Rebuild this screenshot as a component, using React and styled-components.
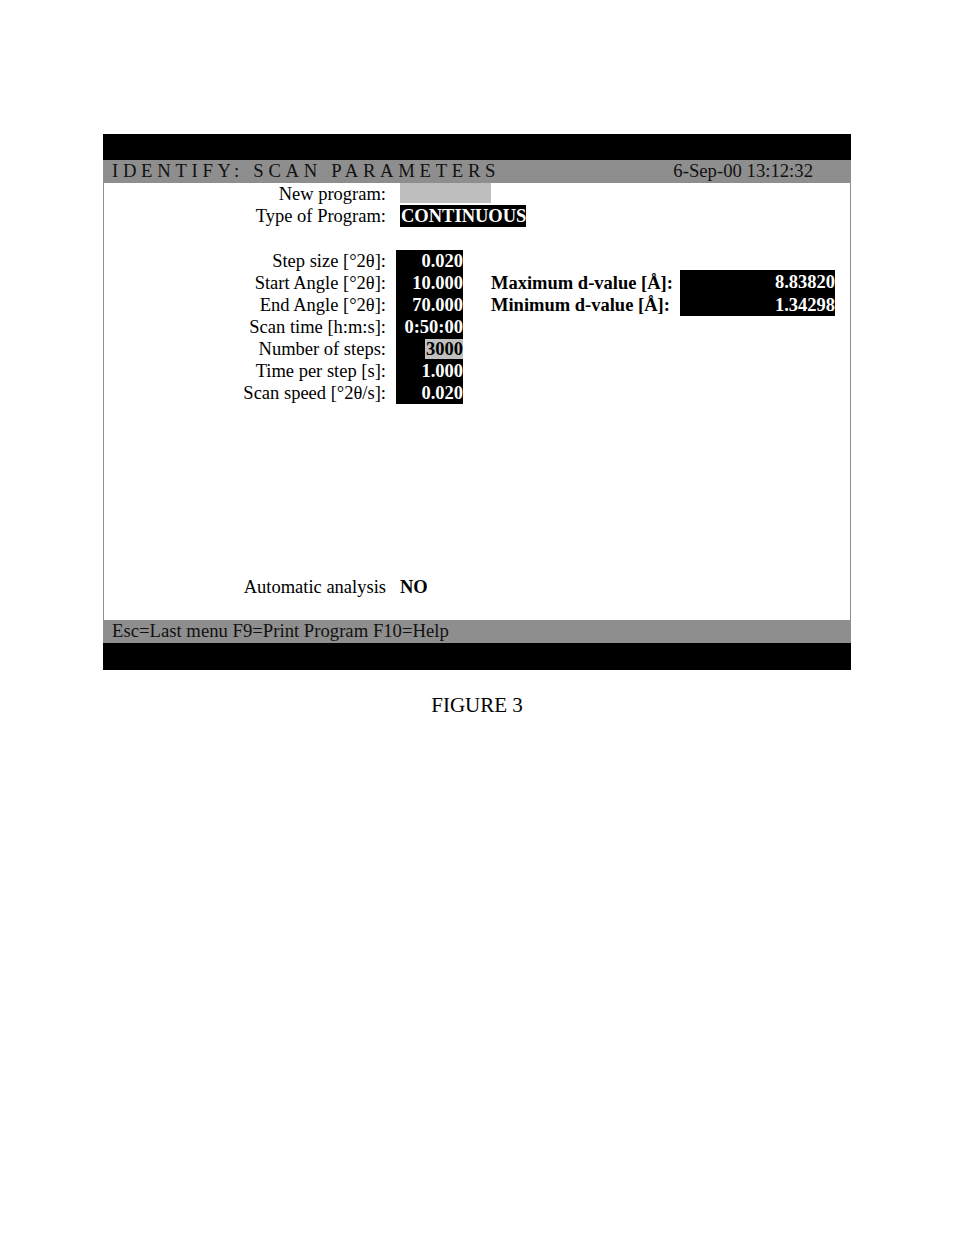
import React from "react";
import styled, { createGlobalStyle } from "styled-components";

const Global = createGlobalStyle`
  html, body { margin: 0; padding: 0; background: #fff; }
  body { font-family: "Liberation Serif", "Times New Roman", serif; color: #000; }
`;

const Page = styled.div`
  width: 954px;
  min-height: 1235px;
  padding-top: 134px;
  box-sizing: border-box;
  display: flex;
  flex-direction: column;
  align-items: flex-start;
`;

const Frame = styled.div`
  margin-left: 103px;
  width: 748px;
  display: flex;
  flex-direction: column;
`;

const BlackBar = styled.div`
  height: ${(p) => p.$h}px;
  background: #000;
`;

const GrayBar = styled.div`
  height: ${(p) => p.$h}px;
  background: #8e8e8e;
  display: flex;
  align-items: center;
  justify-content: space-between;
  padding: 0 38px 0 9px;
  font-size: 18.7px;
  color: #111;
  line-height: 1;
`;

const Title = styled.span`
  letter-spacing: 4.7px;
`;

const Body = styled.div`
  height: 437px;
  box-sizing: border-box;
  border-left: 1px solid #8e8e8e;
  border-right: 1px solid #8e8e8e;
  display: flex;
  flex-direction: column;
  font-size: 18.5px;
`;

const Row = styled.div`
  height: 22px;
  display: flex;
  align-items: center;
  line-height: 1;
`;

const Spacer = styled.div`
  height: ${(p) => p.$h}px;
`;

const Label = styled.div`
  width: 282px;
  text-align: right;
  white-space: nowrap;
`;

const EmptyField = styled.div`
  margin-left: 14px;
  width: 91px;
  height: 20px;
  align-self: flex-start;
  background: #bebebe;
`;

const InvField = styled.div`
  margin-left: 14px;
  background: #000;
  color: #fff;
  font-weight: bold;
  height: 22px;
  display: flex;
  align-items: center;
  padding: 0 0 0 1px;
  white-space: nowrap;
`;

const NumBox = styled.div`
  margin-left: 10px;
  width: 67px;
  height: 100%;
  background: #000;
  color: #fff;
  font-weight: bold;
  display: flex;
  align-items: center;
  justify-content: flex-end;
`;

const Highlight = styled.span`
  background: #c0c0c0;
  color: #000;
  height: 20px;
  display: flex;
  align-items: center;
  padding-left: 1px;
`;

const DLabel = styled.div`
  margin-left: 28px;
  width: 189px;
  font-weight: bold;
  white-space: nowrap;
`;

const DBox = styled.div`
  width: 155px;
  height: ${(p) => p.$h}px;
  align-self: ${(p) => (p.$top ? "flex-end" : "flex-start")};
  background: #000;
  color: #fff;
  font-weight: bold;
  display: flex;
  align-items: center;
  justify-content: flex-end;
`;

const BoldValue = styled.div`
  margin-left: 14px;
  font-weight: bold;
`;

const Caption = styled.div`
  width: 954px;
  text-align: center;
  font-size: 21px;
  margin-top: 23px;
`;

const params = [
  { label: "Step size [°2θ]:", value: "0.020" },
  { label: "Start Angle [°2θ]:", value: "10.000", d: { label: "Maximum d-value [Å]:", value: "8.83820", top: true } },
  { label: "End Angle [°2θ]:", value: "70.000", d: { label: "Minimum d-value [Å]:", value: "1.34298" } },
  { label: "Scan time [h:m:s]:", value: "0:50:00" },
  { label: "Number of steps:", value: "3000", hl: true },
  { label: "Time per step [s]:", value: "1.000" },
  { label: "Scan speed [°2θ/s]:", value: "0.020" },
];

export default function App() {
  return (
    <>
      <Global />
      <Page>
        <Frame>
          <BlackBar $h={26} />
          <GrayBar $h={23}>
            <Title>IDENTIFY:  SCAN  PARAMETERS</Title>
            <span>6-Sep-00 13:12:32</span>
          </GrayBar>
          <Body>
            <Row>
              <Label>New program:</Label>
              <EmptyField />
            </Row>
            <Row>
              <Label>Type of Program:</Label>
              <InvField>CONTINUOUS</InvField>
            </Row>
            <Spacer $h={23} />
            {params.map((p) => (
              <Row key={p.label}>
                <Label>{p.label}</Label>
                <NumBox>{p.hl ? <Highlight>{p.value}</Highlight> : p.value}</NumBox>
                {p.d && (
                  <>
                    <DLabel>{p.d.label}</DLabel>
                    <DBox $h={p.d.top ? 24 : 22} $top={p.d.top}>{p.d.value}</DBox>
                  </>
                )}
              </Row>
            ))}
            <Spacer $h={172} />
            <Row>
              <Label>Automatic analysis</Label>
              <BoldValue>NO</BoldValue>
            </Row>
          </Body>
          <GrayBar $h={23}>
            <span>Esc=Last menu F9=Print Program F10=Help</span>
          </GrayBar>
          <BlackBar $h={27} />
        </Frame>
        <Caption>FIGURE 3</Caption>
      </Page>
    </>
  );
}
